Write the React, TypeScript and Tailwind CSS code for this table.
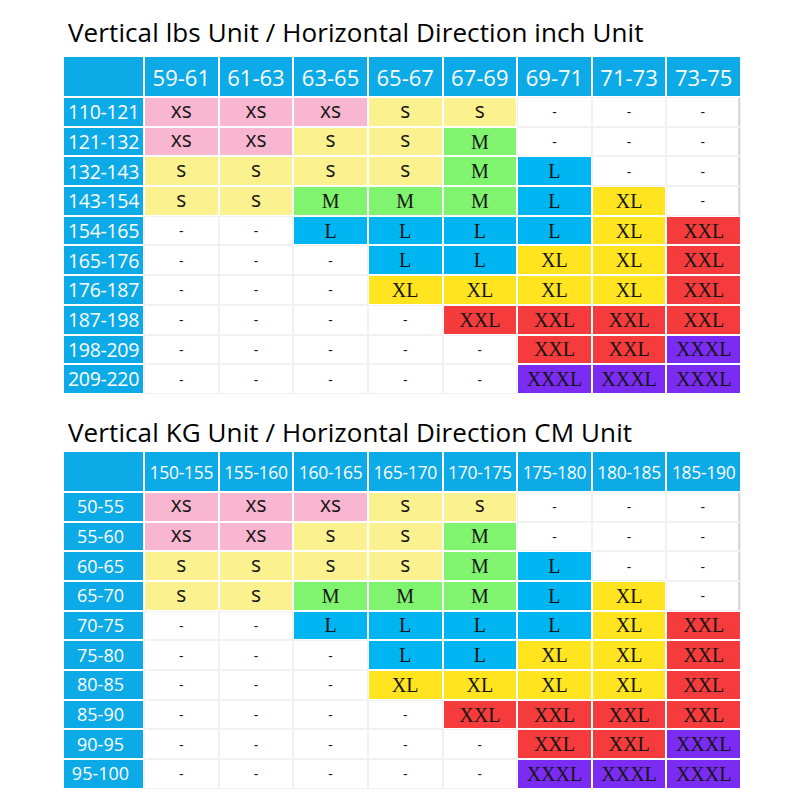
import type { ReactNode } from "react";

type Size = "xs" | "s" | "M" | "L" | "XL" | "XXL" | "XXXL" | "-";

const GRID: Size[][] = [
  ["xs", "xs", "xs", "s", "s", "-", "-", "-"],
  ["xs", "xs", "s", "s", "M", "-", "-", "-"],
  ["s", "s", "s", "s", "M", "L", "-", "-"],
  ["s", "s", "M", "M", "M", "L", "XL", "-"],
  ["-", "-", "L", "L", "L", "L", "XL", "XXL"],
  ["-", "-", "-", "L", "L", "XL", "XL", "XXL"],
  ["-", "-", "-", "XL", "XL", "XL", "XL", "XXL"],
  ["-", "-", "-", "-", "XXL", "XXL", "XXL", "XXL"],
  ["-", "-", "-", "-", "-", "XXL", "XXL", "XXXL"],
  ["-", "-", "-", "-", "-", "XXXL", "XXXL", "XXXL"],
];

const CELL_STYLE: Record<Size, string> = {
  xs: "bg-[#f8b6d0] font-['Open_Sans',sans-serif] text-[21px] pb-[3px]",
  s: "bg-[#fbf18f] font-['Open_Sans',sans-serif] text-[21px] pb-[3px]",
  M: "bg-[#80f46e] font-['Liberation_Serif',serif] text-[20px]",
  L: "bg-[#00b6f2] font-['Liberation_Serif',serif] text-[20px]",
  XL: "bg-[#ffe41f] font-['Liberation_Serif',serif] text-[20px]",
  XXL: "bg-[#f53b3b] font-['Liberation_Serif',serif] text-[20px]",
  XXXL: "bg-[#7b2cf2] font-['Liberation_Serif',serif] text-[20px]",
  "-": "bg-white font-['Open_Sans',sans-serif] text-[14px] shadow-[0_0_0_1px_#f1f1f1]",
};

type ChartProps = {
  title: string;
  cols: string[];
  rows: string[];
  headSize: string;
  rowSize: string;
  className?: string;
};

function Cell({ children, className }: { children: ReactNode; className: string }) {
  return <div className={`flex items-center justify-center text-[#151515] ${className}`}>{children}</div>;
}

function SizeChart({ title, cols, rows, headSize, rowSize, className = "" }: ChartProps) {
  return (
    <section className={className}>
      <h2 className="ml-[4px] font-['Open_Sans',sans-serif] text-[26px] leading-[32px] tracking-[0.1px] text-black">
        {title}
      </h2>
      <div className="mt-[9px] grid w-[676px] grid-cols-[79px_repeat(8,1fr)] grid-rows-[39px_repeat(10,27.7px)] gap-[2px] bg-white">
        <div className="bg-[#0caae6]" />
        {cols.map((c) => (
          <div
            key={c}
            className={`flex items-center justify-center bg-[#0caae6] pt-[2px] font-['Open_Sans',sans-serif] text-white ${headSize}`}
          >
            {c}
          </div>
        ))}
        {rows.map((r, i) => (
          <div key={r} className="contents">
            <div
              className={`flex items-center justify-center bg-[#0caae6] font-['Open_Sans',sans-serif] text-white ${rowSize}`}
            >
              {r}
            </div>
            {GRID[i].map((size, j) => (
              <Cell
                key={j}
                className={`${CELL_STYLE[size]} ${j === 7 && size === "-" ? "border-r-2 border-[#d9d9d9]" : ""}`}
              >
                {size}
              </Cell>
            ))}
          </div>
        ))}
      </div>
    </section>
  );
}

export default function App() {
  return (
    <div className="h-[800px] w-[800px] overflow-hidden bg-white pl-[64px] pt-[16px]">
      <SizeChart
        title="Vertical lbs Unit / Horizontal Direction inch Unit"
        cols={["59-61", "61-63", "63-65", "65-67", "67-69", "69-71", "71-73", "73-75"]}
        rows={["110-121", "121-132", "132-143", "143-154", "154-165", "165-176", "176-187", "187-198", "198-209", "209-220"]}
        headSize="text-[22px]"
        rowSize="text-[19.5px] tracking-[-0.3px]"
      />
      <SizeChart
        className="mt-[23px] [&>div]:mt-[4px]"
        title="Vertical KG Unit / Horizontal Direction CM Unit"
        cols={["150-155", "155-160", "160-165", "165-170", "170-175", "175-180", "180-185", "185-190"]}
        rows={["50-55", "55-60", "60-65", "65-70", "70-75", "75-80", "80-85", "85-90", "90-95", "95-100"]}
        headSize="text-[17.5px] tracking-[-0.3px]"
        rowSize="text-[18px] pr-[6px]"
      />
    </div>
  );
}
